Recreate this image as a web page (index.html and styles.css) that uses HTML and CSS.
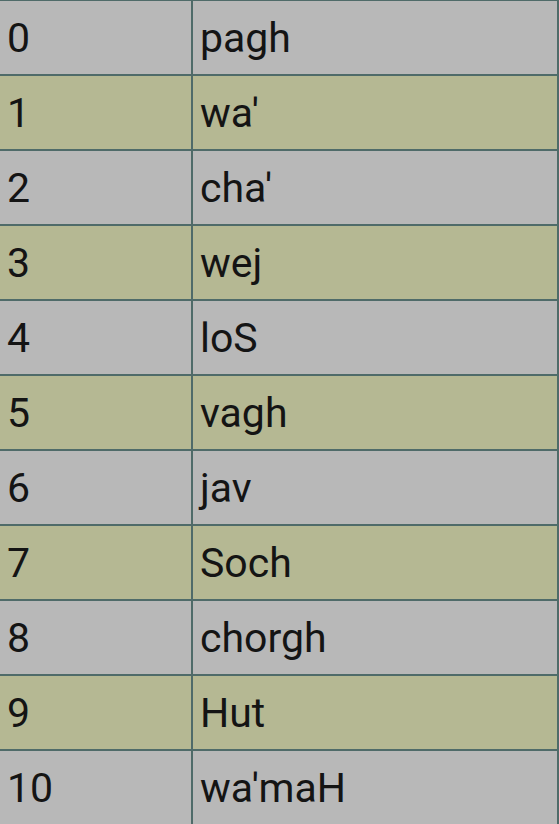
FILE: index.html
```html
<!DOCTYPE html>
<html>
<head>
<meta charset="utf-8">
<link rel="stylesheet" href="styles.css">
</head>
<body>
<div class="table">
  <div class="row even"><div class="num">0</div><div class="word">pagh</div></div>
  <div class="row odd"><div class="num">1</div><div class="word">wa'</div></div>
  <div class="row even"><div class="num">2</div><div class="word">cha'</div></div>
  <div class="row odd"><div class="num">3</div><div class="word">wej</div></div>
  <div class="row even"><div class="num">4</div><div class="word">loS</div></div>
  <div class="row odd"><div class="num">5</div><div class="word">vagh</div></div>
  <div class="row even"><div class="num">6</div><div class="word">jav</div></div>
  <div class="row odd"><div class="num">7</div><div class="word">Soch</div></div>
  <div class="row even"><div class="num">8</div><div class="word">chorgh</div></div>
  <div class="row odd"><div class="num">9</div><div class="word">Hut</div></div>
  <div class="row even"><div class="num">10</div><div class="word">wa'maH</div></div>
</div>
</body>
</html>
```
FILE: styles.css
```css
html, body {
  margin: 0;
  padding: 0;
  background: #b8b8b8;
  overflow: hidden;
}
.table {
  width: 559px;
  box-sizing: border-box;
  border-top: 1px solid #4f6b69;
  border-right: 2px solid #4f6b69;
  font-family: Roboto, "Liberation Sans", sans-serif;
  font-size: 41px;
  color: #141414;
}
.row {
  display: grid;
  grid-template-columns: 193px 1fr;
  height: 75px;
  box-sizing: border-box;
  border-bottom: 2px solid #4f6b69;
}
.even { background: #b8b8b8; }
.odd { background: #b5b893; }
.num, .word {
  display: flex;
  align-items: center;
  padding-left: 7px;
}
.num {
  border-right: 2px solid #4f6b69;
}
.word {
  padding-left: 7px;
}
```
